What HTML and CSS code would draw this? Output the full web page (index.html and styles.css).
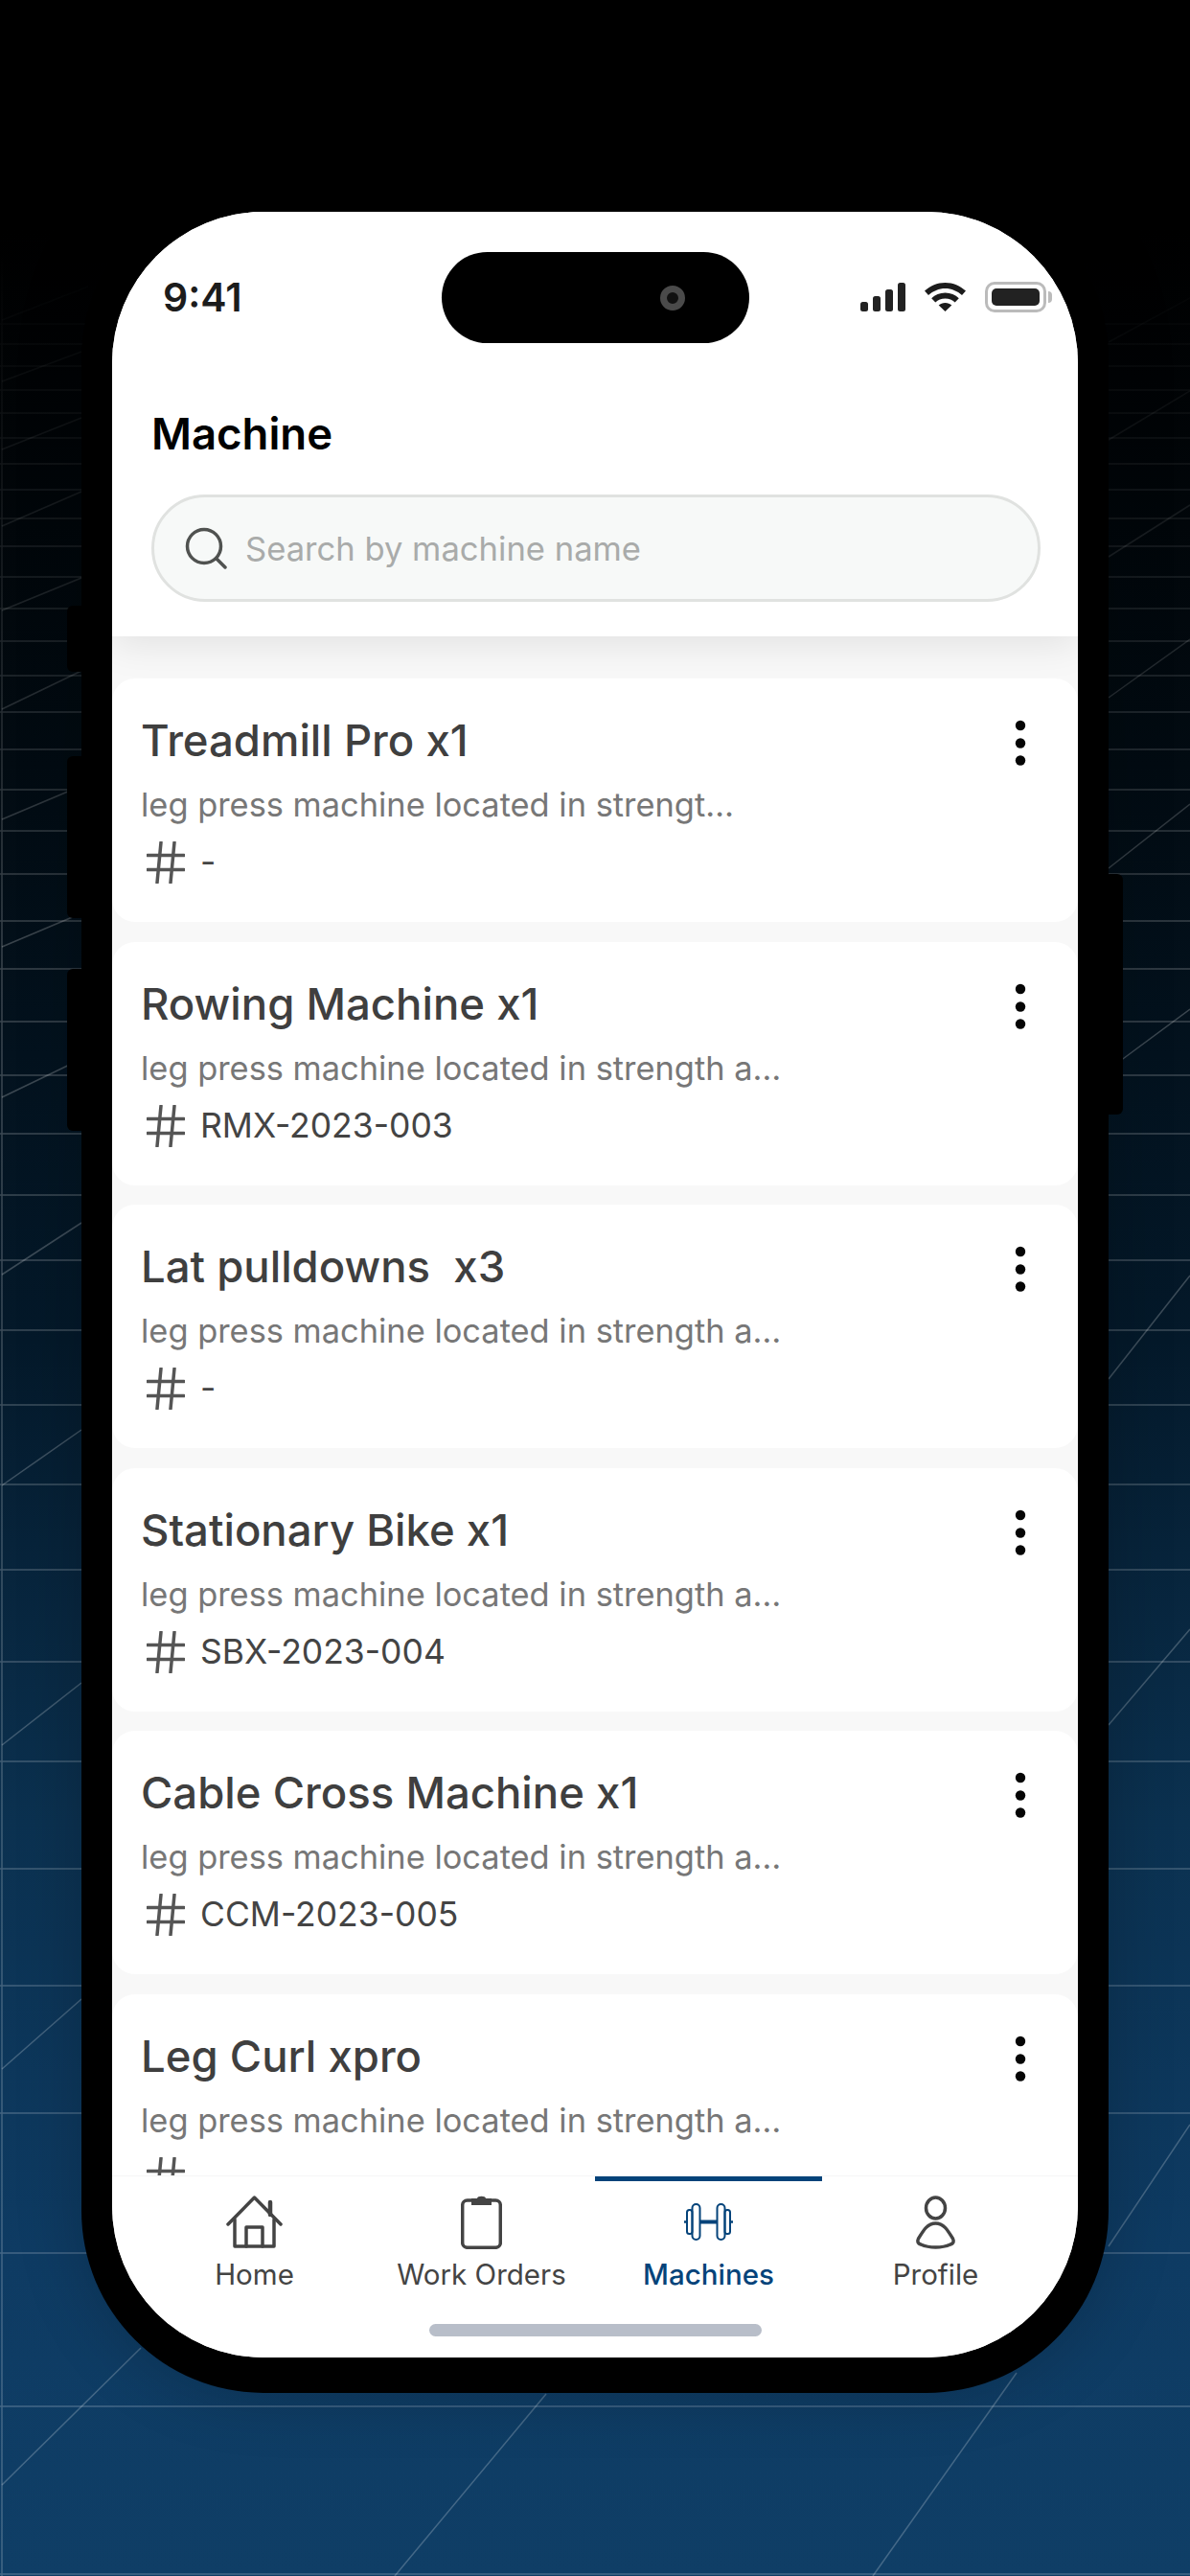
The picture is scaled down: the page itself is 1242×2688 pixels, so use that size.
FILE: index.html
```html
<!DOCTYPE html>
<html>
<head>
    <meta charset="UTF-8">
    <title>Machine</title>
    <link rel="stylesheet" href="styles.css">
</head>
<body>
    <svg class="backdrop" viewBox="0 0 1242 2688" width="1242" height="2688">
        <defs>
            <linearGradient id="fade" gradientUnits="userSpaceOnUse" x1="0" y1="260" x2="0" y2="1000">
                <stop offset="0" stop-color="#fff" stop-opacity="0"/>
                <stop offset="1" stop-color="#fff" stop-opacity="0.22"/>
            </linearGradient>
        </defs>
        <path class="grid" stroke="url(#fade)" d="M0 338H1242M0 359H1242M0 382H1242M0 407H1242M0 431H1242M0 457H1242M0 484H1242M0 511H1242M0 541H1242M0 570H1242M0 602H1242M0 635H1242M0 669H1242M0 705H1242M0 743H1242M0 782H1242M0 824H1242M0 867H1242M0 912H1242M0 961H1242M0 1011H1242M0 1066H1242M0 1122H1242M0 1183H1242M0 1247H1242M0 1315H1242M0 1388H1242M0 1466H1242M0 1549H1242M0 1638H1242M0 1734H1242M0 1838H1242M0 1950H1242M0 2072H1242M0 2205H1242M0 2351H1242M0 2511H1242M0 2686H1242M2 260V2688"/>
        <path class="grid" stroke="url(#fade)" d="M2 334L92 299M2 398L85 367M2 469L85 436M2 549L85 513M2 637L85 603M2 740L85 700M2 855L85 820M2 988L85 953M2 1145L85 1105M2 1330L85 1276M2 1550L85 1492M2 1821L85 1756M2 2159L85 2086M2 2593L147 2450M412 2688L570 2498M911 2688L1061 2476M1157 2344L1242 2217M1157 1800L1242 1700M1157 1439L1242 1331M1157 1116L1242 1053M1157 906L1242 839M1157 728L1242 667M1157 581L1242 527M1157 459L1242 408M1157 357L1242 311"/>
    </svg>

    <div class="phone">
        <span class="side-btn btn-mute"></span>
        <span class="side-btn btn-up"></span>
        <span class="side-btn btn-down"></span>
        <span class="side-btn btn-power"></span>

        <div class="screen">
            <div class="island"><span class="camera"></span></div>

            <div class="status-bar">
                <span class="time">9:41</span>
                <div class="status-icons">
                    <svg width="47" height="30" viewBox="0 0 47 30" fill="#222">
                        <rect x="0" y="20" width="8" height="10" rx="2.5"/>
                        <rect x="13" y="14" width="8" height="16" rx="2.5"/>
                        <rect x="26" y="7" width="8" height="23" rx="2.5"/>
                        <rect x="39" y="0" width="8" height="30" rx="2.5"/>
                    </svg>
                    <svg width="43" height="30" viewBox="0 0 43 30" fill="#1c1c1c">
                        <path d="M21.5 0C13 0 6 3.300 0 8.500L4 13C8.800 8.700 15 6 21.500 6S34.200 8.700 39 13L43 8.500C37 3.300 30 0 21.500 0Z"/>
                        <path d="M21.500 10.500C15.800 10.500 11 12.800 7.200 16.200L11.300 20.600C14 18.200 17.500 16.600 21.500 16.600S29 18.200 31.700 20.600L35.800 16.200C32 12.800 27.200 10.500 21.500 10.500Z"/>
                        <path d="M21.500 21C18.800 21 16.500 22 14.700 23.500L21.500 30L28.300 23.500C26.500 22 24.200 21 21.500 21Z"/>
                    </svg>
                    <div class="battery"><span class="battery-fill"></span></div>
                </div>
            </div>

            <div class="header">
                <h1 class="page-title">Machine</h1>
                <div class="search">
                    <svg width="44" height="44" viewBox="0 0 44 44" fill="none" stroke="#505250" stroke-width="3.500" stroke-linecap="round">
                        <circle cx="20" cy="20" r="17.500"/>
                        <path d="M33 33L42 42"/>
                    </svg>
                    <span class="search-text">Search by machine name</span>
                </div>
            </div>

            <div class="list">
                <div class="card">
                    <div class="card-body">
                        <div class="card-title">Treadmill Pro x1</div>
                        <div class="card-desc">leg press machine located in strengt…</div>
                        <div class="card-code">
                            <svg class="hash" width="40" height="44" viewBox="0 0 40 44"><path d="M1 14.500H39M1 29.500H39M15 1L11 43M29 1L25 43"/></svg>
                            <span>-</span>
                        </div>
                    </div>
                    <svg class="kebab" width="12" height="50" viewBox="0 0 12 50"><circle cx="6" cy="6" r="5.200"/><circle cx="6" cy="24.500" r="5.200"/><circle cx="6" cy="42.500" r="5.200"/></svg>
                </div>
                <div class="card">
                    <div class="card-body">
                        <div class="card-title">Rowing Machine x1</div>
                        <div class="card-desc">leg press machine located in strength a…</div>
                        <div class="card-code">
                            <svg class="hash" width="40" height="44" viewBox="0 0 40 44"><path d="M1 14.500H39M1 29.500H39M15 1L11 43M29 1L25 43"/></svg>
                            <span>RMX-2023-003</span>
                        </div>
                    </div>
                    <svg class="kebab" width="12" height="50" viewBox="0 0 12 50"><circle cx="6" cy="6" r="5.200"/><circle cx="6" cy="24.500" r="5.200"/><circle cx="6" cy="42.500" r="5.200"/></svg>
                </div>
                <div class="card">
                    <div class="card-body">
                        <div class="card-title">Lat pulldowns  x3</div>
                        <div class="card-desc">leg press machine located in strength a…</div>
                        <div class="card-code">
                            <svg class="hash" width="40" height="44" viewBox="0 0 40 44"><path d="M1 14.500H39M1 29.500H39M15 1L11 43M29 1L25 43"/></svg>
                            <span>-</span>
                        </div>
                    </div>
                    <svg class="kebab" width="12" height="50" viewBox="0 0 12 50"><circle cx="6" cy="6" r="5.200"/><circle cx="6" cy="24.500" r="5.200"/><circle cx="6" cy="42.500" r="5.200"/></svg>
                </div>
                <div class="card">
                    <div class="card-body">
                        <div class="card-title">Stationary Bike x1</div>
                        <div class="card-desc">leg press machine located in strength a…</div>
                        <div class="card-code">
                            <svg class="hash" width="40" height="44" viewBox="0 0 40 44"><path d="M1 14.500H39M1 29.500H39M15 1L11 43M29 1L25 43"/></svg>
                            <span>SBX-2023-004</span>
                        </div>
                    </div>
                    <svg class="kebab" width="12" height="50" viewBox="0 0 12 50"><circle cx="6" cy="6" r="5.200"/><circle cx="6" cy="24.500" r="5.200"/><circle cx="6" cy="42.500" r="5.200"/></svg>
                </div>
                <div class="card">
                    <div class="card-body">
                        <div class="card-title">Cable Cross Machine x1</div>
                        <div class="card-desc">leg press machine located in strength a…</div>
                        <div class="card-code">
                            <svg class="hash" width="40" height="44" viewBox="0 0 40 44"><path d="M1 14.500H39M1 29.500H39M15 1L11 43M29 1L25 43"/></svg>
                            <span>CCM-2023-005</span>
                        </div>
                    </div>
                    <svg class="kebab" width="12" height="50" viewBox="0 0 12 50"><circle cx="6" cy="6" r="5.200"/><circle cx="6" cy="24.500" r="5.200"/><circle cx="6" cy="42.500" r="5.200"/></svg>
                </div>
                <div class="card">
                    <div class="card-body">
                        <div class="card-title">Leg Curl xpro</div>
                        <div class="card-desc">leg press machine located in strength a…</div>
                        <div class="card-code">
                            <svg class="hash" width="40" height="44" viewBox="0 0 40 44"><path d="M1 14.500H39M1 29.500H39M15 1L11 43M29 1L25 43"/></svg>
                        </div>
                    </div>
                    <svg class="kebab" width="12" height="50" viewBox="0 0 12 50"><circle cx="6" cy="6" r="5.200"/><circle cx="6" cy="24.500" r="5.200"/><circle cx="6" cy="42.500" r="5.200"/></svg>
                </div>
            </div>

            <div class="nav">
                <div class="tabs">
                    <div class="tab">
                        <div class="tab-icon">
                            <svg width="59" height="56" viewBox="0 0 59 56" fill="none" stroke="#444" stroke-width="3.500" stroke-linejoin="round" stroke-linecap="round">
                                <path d="M2 30L29.500 2L57 30"/>
                                <path d="M9 25V53H50V25"/>
                                <path d="M21 53V33H38V53"/>
                                <path d="M46 7V20" stroke-width="4.500"/>
                            </svg>
                        </div>
                        <span>Home</span>
                    </div>
                    <div class="tab">
                        <div class="tab-icon">
                            <svg width="43" height="57" viewBox="0 0 43 57">
                                <rect x="1.700" y="6" width="39.600" height="49.300" rx="5" fill="none" stroke="#444" stroke-width="3.500"/>
                                <path d="M11 11V4H17C17 1 26 1 26 4H32V11Z" fill="#444"/>
                            </svg>
                        </div>
                        <span>Work Orders</span>
                    </div>
                    <div class="tab active">
                        <div class="tab-icon">
                            <svg width="51" height="39" viewBox="0 0 51 39" fill="none" stroke="#04437a" stroke-width="2">
                                <rect x="8.500" y="1" width="8" height="37" rx="4"/>
                                <rect x="34.500" y="1" width="8" height="37" rx="4"/>
                                <rect x="3" y="7" width="5.500" height="25" rx="2.500"/>
                                <rect x="42.500" y="7" width="5.500" height="25" rx="2.500"/>
                                <path d="M16.500 19.500H34.500" stroke-width="4"/>
                                <path d="M0 19.500H3M48 19.500H51" stroke-width="2.500"/>
                            </svg>
                        </div>
                        <span>Machines</span>
                    </div>
                    <div class="tab">
                        <div class="tab-icon">
                            <svg width="43" height="56" viewBox="0 0 43 56" fill="none" stroke="#444" stroke-width="3.500">
                                <ellipse cx="21.500" cy="13" rx="10" ry="11"/>
                                <path d="M21.500 29C13 29 9 36 3.500 45C2 48 3 50 6 51C15 55 28 55 37 51C40 50 41 48 39.500 45C34 36 30 29 21.500 29Z"/>
                            </svg>
                        </div>
                        <span>Profile</span>
                    </div>
                </div>
                <div class="home-bar"></div>
            </div>
        </div>
    </div>
</body>
</html>
```

FILE: styles.css
```css
* {
    box-sizing: border-box;
}

html, body {
    margin: 0;
    padding: 0;
}

body {
    position: relative;
    width: 1242px;
    height: 2688px;
    overflow: hidden;
    padding-top: 185px;
    display: flex;
    justify-content: center;
    align-items: flex-start;
    font-family: Inter, "Liberation Sans", sans-serif;
    background: linear-gradient(180deg, #000 0, #000 240px, #020b12 800px, #04192a 1400px, #0b3150 1900px, #0e3b63 2350px, #0f3e66 2688px);
}

.backdrop {
    position: absolute;
    left: 0;
    top: 0;
}

.grid {
    fill: none;
    stroke-width: 1.500;
}

.phone {
    position: relative;
    width: 1072px;
    height: 2312px;
    padding: 36px 32px 37px;
    background: #000;
    border-radius: 190px;
    box-shadow: 0 0 70px rgba(0, 0, 0, 0.2);
}

.side-btn {
    position: absolute;
    width: 20px;
    background: #000;
    border-radius: 6px;
}

.btn-mute {
    left: -15px;
    top: 447px;
    height: 69px;
}

.btn-up {
    left: -15px;
    top: 604px;
    height: 169px;
}

.btn-down {
    left: -15px;
    top: 826px;
    height: 169px;
}

.btn-power {
    right: -15px;
    top: 727px;
    height: 251px;
}

.screen {
    position: relative;
    height: 100%;
    display: flex;
    flex-direction: column;
    overflow: hidden;
    background: #f8f8f8;
    border-radius: 158px;
}

.island {
    position: absolute;
    z-index: 4;
    left: 344px;
    top: 42px;
    width: 321px;
    height: 95px;
    background: #000;
    border-radius: 48px;
}

.camera {
    position: absolute;
    left: 228px;
    top: 35px;
    width: 26px;
    height: 26px;
    border: 7px solid #4a4a4a;
    border-radius: 50%;
    background: #111;
}

.status-bar {
    position: relative;
    z-index: 3;
    height: 178px;
    flex-shrink: 0;
    display: flex;
    justify-content: space-between;
    align-items: center;
    padding: 0 28px 0 53px;
    background: #fff;
}

.time {
    font-size: 41px;
    font-weight: 600;
    color: #1c1c1c;
}

.status-icons {
    display: flex;
    align-items: center;
    gap: 20px;
}

.battery {
    position: relative;
    width: 64px;
    height: 32px;
    padding: 4px;
    border: 3px solid #bbb;
    border-radius: 10px;
    margin-right: 5px;
}

.battery::after {
    content: "";
    position: absolute;
    right: -9px;
    top: 7px;
    width: 4px;
    height: 12px;
    background: #bbb;
    border-radius: 0 4px 4px 0;
}

.battery-fill {
    display: block;
    height: 100%;
    background: #222;
    border-radius: 5px;
}

.header {
    position: relative;
    z-index: 2;
    flex-shrink: 0;
    padding: 24px 39px 36px 41px;
    background: #fff;
    box-shadow: 0 6px 40px rgba(0, 0, 0, 0.1);
}

.page-title {
    margin: 0 0 33px;
    font-size: 45.500px;
    line-height: 60px;
    font-weight: 600;
    color: #000;
}

.search {
    height: 112px;
    display: flex;
    align-items: center;
    gap: 19px;
    padding-left: 32px;
    background: #f7f9f8;
    border: 3px solid #e0e2e0;
    border-radius: 56px;
}

.search-text {
    font-size: 34.600px;
    color: #a9abaa;
}

.list {
    flex: 1;
    min-height: 0;
    overflow: hidden;
    display: flex;
    flex-direction: column;
    gap: 20.500px;
    padding-top: 44px;
}

.card {
    flex-shrink: 0;
    height: 254px;
    display: flex;
    justify-content: space-between;
    align-items: flex-start;
    padding: 35px 54px 40px 30px;
    background: #fff;
    border-radius: 24px;
}

.card-title {
    font-size: 45.500px;
    line-height: 60px;
    font-weight: 500;
    color: #3f3f3f;
    white-space: pre;
}

.card-desc {
    margin-top: 13px;
    font-size: 34.400px;
    line-height: 48px;
    color: #777;
}

.card-code {
    margin-top: 14px;
    display: flex;
    align-items: center;
    gap: 16px;
    padding-left: 6px;
    font-size: 35.500px;
    line-height: 44px;
    color: #444;
}

.hash {
    fill: none;
    stroke: #555;
    stroke-width: 3.500;
    stroke-linecap: round;
}

.kebab {
    margin-top: 8px;
    fill: #050505;
}

.nav {
    position: relative;
    z-index: 2;
    flex-shrink: 0;
    height: 190px;
    padding: 0 30px;
    background: #fff;
    border-top: 1px solid #f6f6f6;
}

.tabs {
    display: grid;
    grid-template-columns: repeat(4, 237px);
}

.tab {
    display: flex;
    flex-direction: column;
    align-items: center;
    padding-top: 14px;
    border-top: 5px solid transparent;
    font-size: 29.500px;
    line-height: 36px;
    color: #444;
}

.tab.active {
    border-top-color: #04437a;
    color: #04437a;
    font-weight: 500;
}

.tab-icon {
    height: 57px;
    margin-bottom: 8px;
    display: flex;
    align-items: center;
}

.home-bar {
    width: 347px;
    height: 13px;
    margin: 34px auto 0;
    background: #b8bec9;
    border-radius: 7px;
}
```
